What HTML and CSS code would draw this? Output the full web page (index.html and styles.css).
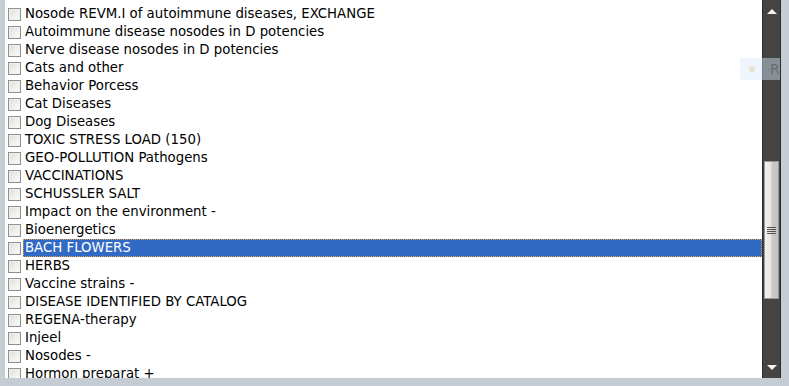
FILE: index.html
```html
<!DOCTYPE html>
<html lang="en">
<head>
	<meta charset="UTF-8">
	<title>Catalog list</title>
	<link rel="stylesheet" href="styles.css">
</head>
<body>
	<div id="wrap">
		<div id="list">
			<label class="row"><input type="checkbox"><span>Nosode REVM.I of autoimmune diseases, EXCHANGE</span></label>
			<label class="row"><input type="checkbox"><span>Autoimmune disease nosodes in D potencies</span></label>
			<label class="row"><input type="checkbox"><span>Nerve disease nosodes in D potencies</span></label>
			<label class="row"><input type="checkbox"><span>Cats and other</span></label>
			<label class="row"><input type="checkbox"><span>Behavior Porcess</span></label>
			<label class="row"><input type="checkbox"><span>Cat Diseases</span></label>
			<label class="row"><input type="checkbox"><span>Dog Diseases</span></label>
			<label class="row"><input type="checkbox"><span>TOXIC STRESS LOAD (150)</span></label>
			<label class="row"><input type="checkbox"><span>GEO-POLLUTION Pathogens</span></label>
			<label class="row"><input type="checkbox"><span>VACCINATIONS</span></label>
			<label class="row"><input type="checkbox"><span>SCHUSSLER SALT</span></label>
			<label class="row"><input type="checkbox"><span>Impact on the environment -</span></label>
			<label class="row"><input type="checkbox"><span>Bioenergetics</span></label>
			<label class="row choose"><input type="checkbox"><span>BACH FLOWERS</span></label>
			<label class="row"><input type="checkbox"><span>HERBS</span></label>
			<label class="row"><input type="checkbox"><span>Vaccine strains -</span></label>
			<label class="row"><input type="checkbox"><span>DISEASE IDENTIFIED BY CATALOG</span></label>
			<label class="row"><input type="checkbox"><span>REGENA-therapy</span></label>
			<label class="row"><input type="checkbox"><span>Injeel</span></label>
			<label class="row"><input type="checkbox"><span>Nosodes -</span></label>
			<label class="row"><input type="checkbox"><span>Hormon preparat +</span></label>
		</div>
		<div id="scroll">
			<div class="arrow up"></div>
			<div class="track">
				<div class="thumb"><i></i><i></i><i></i><i></i></div>
			</div>
			<div class="arrow down"></div>
		</div>
		<div id="tip"><b></b>R</div>
	</div>
</body>
</html>
```

FILE: styles.css
```css
html,body{
	margin: 0;
	height: 100%;
}
body{
	background: #c6ccd4;
	font-family: "DejaVu Sans", Verdana, sans-serif;
	overflow: hidden;
}
#wrap{
	position: relative;
	display: flex;
	height: 378px;
	padding-left: 5px;
	padding-right: 8px;
}
#list{
	flex: 1;
	background: #fff;
	padding-top: 5px;
	overflow: hidden;
}
.row{
	display: flex;
	align-items: center;
	height: 18px;
	font-size: 13.3px;
	color: #000;
	white-space: nowrap;
}
.row input{
	-webkit-appearance: none;
	appearance: none;
	width: 13px;
	height: 13px;
	margin: 0 2px 0 3px;
	border: 1px solid #8e8f8f;
	background: linear-gradient(135deg,#dcdcd7 0%,#f4f4f2 70%,#fff 100%);
	box-shadow: inset 0 0 0 1px #f0f0ee;
	flex: none;
}
.row span{
	flex: 1;
	height: 18px;
	padding-left: 1px;
	border: 1px dotted transparent;
	box-sizing: border-box;
	line-height: 16px;
}
.choose span{
	background: #316ac5;
	color: #fff;
	border-color: #e8a040;
}
#scroll{
	width: 17px;
	display: flex;
	flex-direction: column;
	background: #444;
	border-left: 1px solid #2c2c2c;
	border-right: 1px solid #2c2c2c;
}
.arrow{
	height: 22px;
	display: flex;
	align-items: center;
	justify-content: center;
}
.arrow:before{
	content: "";
	border-left: 5px solid transparent;
	border-right: 5px solid transparent;
}
.up:before{
	border-bottom: 5px solid #f2f2f2;
}
.down:before{
	border-top: 5px solid #f2f2f2;
}
.track{
	flex: 1;
	padding-top: 139px;
}
.thumb{
	height: 136px;
	margin: 0 1px;
	border: 1px solid #999;
	background: linear-gradient(90deg,#f2f2f2 0%,#e6e6e6 45%,#c9c9c9 55%,#c4c4c4 100%);
	display: flex;
	flex-direction: column;
	align-items: center;
	justify-content: center;
	gap: 1px;
}
.thumb i{
	display: block;
	width: 9px;
	height: 1px;
	background: #555;
}
#tip{
	position: absolute;
	left: 740px;
	top: 58px;
	width: 40px;
	height: 22px;
	background: rgba(220,232,250,0.45);
	color: rgba(0,0,0,0.25);
	font-size: 14px;
	line-height: 22px;
	padding-left: 30px;
	box-sizing: border-box;
	overflow: hidden;
}
#tip b{
	position: absolute;
	left: 9px;
	top: 8px;
	width: 6px;
	height: 6px;
	border-radius: 3px;
	background: rgba(230,220,180,0.7);
}
```
